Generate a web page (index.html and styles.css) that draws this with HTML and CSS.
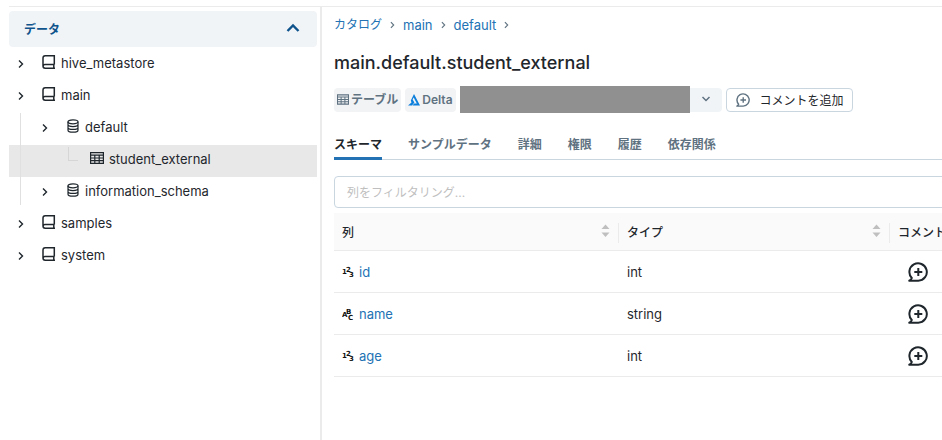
FILE: index.html
```html
<!DOCTYPE html>
<html lang="ja">

<head>
 <meta charset="UTF-8">
 <meta name="viewport" content="width=device-width, initial-scale=1.0">
 <title>main.default.student_external</title>
 <link rel="stylesheet" href="styles.css">
</head>

<body>

 <!-- Iconos compartidos -->
 <svg class="sprite" aria-hidden="true">
  <symbol id="i-right" viewBox="0 0 8 10"><path d="M2 1.5 5.5 5 2 8.5" fill="none" stroke="currentColor" stroke-width="1.4"/></symbol>
  <symbol id="i-book" viewBox="0 0 14 14"><path d="M12.3 9.6V.8H3.2Q1 .8 1 3v8q0 2.2 2.2 2.2h9.8M12.3 9.6H3Q1 9.6 1 11.4M11.8 9.6v3.6" fill="none" stroke="currentColor" stroke-width="1.5"/></symbol>
  <symbol id="i-db" viewBox="0 0 14 14"><g fill="none" stroke="currentColor" stroke-width="1.2"><ellipse cx="7" cy="2.8" rx="5" ry="2"/><path d="M2 2.8v8.4c0 1.1 2.2 2 5 2s5-.9 5-2V2.8M2 5.6c0 1.1 2.2 2 5 2s5-.9 5-2M2 8.4c0 1.1 2.2 2 5 2s5-.9 5-2"/></g></symbol>
  <symbol id="i-table" viewBox="0 0 14 12"><path d="M.6.6h12.8v10.8H.6zM.6 3.2h12.8M.6 6h12.8M.6 8.7h12.8M4.8 3v8M9.2 3v8" fill="none" stroke="currentColor" stroke-width="1.2"/></symbol>
  <symbol id="i-comment" viewBox="0 0 20 20"><path d="M1.3 18.7h9A8.7 8.7 0 1 0 3.8 16q-.6 1.8-2.5 2.7zM10.3 6v8M6.3 10h8" fill="none" stroke="currentColor" stroke-width="2" stroke-linejoin="round"/></symbol>
  <symbol id="i-sort" viewBox="0 0 8 14"><path d="M0 5 4 .5 8 5zM0 8.5h8L4 13z" fill="currentColor"/></symbol>
  <symbol id="i-num" viewBox="0 0 13 12"><g class="glyph"><text x="0" y="8">1</text><text x="4" y="6">2</text><text x="7" y="11">3</text></g></symbol>
  <symbol id="i-abc" viewBox="0 0 13 12"><g class="glyph"><text x="0" y="9">A</text><text x="4" y="6">B</text><text x="6" y="12">C</text></g></symbol>
 </svg>

 <div class="layout">

  <aside class="sidebar">
   <button class="sidebar-title" type="button" aria-expanded="true">
    データ
    <svg width="14" height="10" viewBox="0 0 14 10"><path d="M1.5 8 7 2.5 12.5 8" fill="none" stroke="currentColor" stroke-width="2.4"/></svg>
   </button>
   <ul class="tree">
    <li class="row"><span class="caret"><svg><use href="#i-right"/></svg></span><svg class="icon"><use href="#i-book"/></svg>hive_metastore</li>
    <li class="row"><span class="caret"><svg><use href="#i-right"/></svg></span><svg class="icon"><use href="#i-book"/></svg>main</li>
    <li class="row"><span class="indent line"></span><span class="caret"><svg><use href="#i-right"/></svg></span><svg class="icon"><use href="#i-db"/></svg>default</li>
    <li class="row selected"><span class="indent line"></span><span class="indent"></span><span class="indent elbow"></span><svg class="icon"><use href="#i-table"/></svg>student_external</li>
    <li class="row"><span class="indent line end"></span><span class="caret"><svg><use href="#i-right"/></svg></span><svg class="icon"><use href="#i-db"/></svg>information_schema</li>
    <li class="row"><span class="caret"><svg><use href="#i-right"/></svg></span><svg class="icon"><use href="#i-book"/></svg>samples</li>
    <li class="row"><span class="caret"><svg><use href="#i-right"/></svg></span><svg class="icon"><use href="#i-book"/></svg>system</li>
   </ul>
  </aside>

  <main class="content">
   <nav class="breadcrumb">
    <a class="ja" href="#">カタログ</a>
    <svg><use href="#i-right"/></svg>
    <a href="#">main</a>
    <svg><use href="#i-right"/></svg>
    <a href="#">default</a>
    <svg><use href="#i-right"/></svg>
   </nav>

   <h1 class="title">main.default.student_external</h1>

   <div class="meta">
    <span class="tag"><svg width="12" height="11"><use href="#i-table"/></svg>テーブル</span>
    <span class="tag"><svg width="12" height="12" viewBox="0 0 12 12"><path d="M6 0 12 11.5H4.5L6.2 9.6H8.8L5.7 3.6 4.6 5.6 6.4 8.6 4 11.5H0L3.5 8.4 2.8 6.4z" fill="#0b7fdb"/></svg>Delta</span>
    <div class="owner">
     <span class="owner-name"></span>
     <button class="owner-toggle" type="button" aria-label="所有者"><svg width="10" height="6" viewBox="0 0 10 6"><path d="M1.5 1 5 4.5 8.5 1" fill="none" stroke="currentColor" stroke-width="1.5"/></svg></button>
    </div>
    <button class="add-comment" type="button"><svg width="14" height="14"><use href="#i-comment"/></svg>コメントを追加</button>
   </div>

   <nav class="tabs">
    <a class="tab active" href="#">スキーマ</a>
    <a class="tab" href="#">サンプルデータ</a>
    <a class="tab" href="#">詳細</a>
    <a class="tab" href="#">権限</a>
    <a class="tab" href="#">履歴</a>
    <a class="tab" href="#">依存関係</a>
   </nav>

   <input class="filter" type="text" placeholder="列をフィルタリング..." aria-label="列をフィルタリング">

   <table class="columns">
    <thead>
     <tr>
      <th class="col-name"><div class="head">列<svg><use href="#i-sort"/></svg></div></th>
      <th class="col-type"><div class="head">タイプ<svg><use href="#i-sort"/></svg></div></th>
      <th><div class="head last">コメント</div></th>
     </tr>
    </thead>
    <tbody>
     <tr>
      <td><div class="field"><svg><use href="#i-num"/></svg><a href="#">id</a></div></td>
      <td>int</td>
      <td><button class="comment" type="button" aria-label="コメントを追加"><svg><use href="#i-comment"/></svg></button></td>
     </tr>
     <tr>
      <td><div class="field"><svg><use href="#i-abc"/></svg><a href="#">name</a></div></td>
      <td>string</td>
      <td><button class="comment" type="button" aria-label="コメントを追加"><svg><use href="#i-comment"/></svg></button></td>
     </tr>
     <tr>
      <td><div class="field"><svg><use href="#i-num"/></svg><a href="#">age</a></div></td>
      <td>int</td>
      <td><button class="comment" type="button" aria-label="コメントを追加"><svg><use href="#i-comment"/></svg></button></td>
     </tr>
    </tbody>
   </table>
  </main>

 </div>

</body>

</html>
```
FILE: styles.css
```css
 :root {
  --main-font: Inter, "Noto Sans CJK JP", sans-serif;
  --text: #1f272d;
  --muted: #5f7281;
  --link: #2272b4;
  --line: #ebebeb;
  --border: #c9d6e0;
  --soft: #f1f4f7;
 }

 *,
 *::before,
 *::after {
  box-sizing: border-box;
 }

 body {
  margin: 0;
  padding: 6px 0 0 9px;
  font-family: var(--main-font);
  font-size: 13px;
  line-height: 20px;
  color: var(--text);
  overflow: hidden;
 }

 button,
 input {
  font-family: inherit;
  font-size: 12px;
  color: inherit;
 }

 a {
  color: var(--link);
  text-decoration: none;
 }

 .sprite {
  display: none;
 }

 .layout {
  display: flex;
  min-height: calc(100vh - 6px);
  border-top: 1px solid var(--line);
 }

 /*  - - - Barra lateral - - -  */
 .sidebar {
  flex: 0 0 313px;
  padding: 4px 3px 0 0;
  border-right: 2px solid var(--line);
 }

 .sidebar-title {
  display: flex;
  align-items: center;
  justify-content: space-between;
  width: 100%;
  height: 36px;
  padding: 0 17px 2px 15px;
  border: 0;
  border-radius: 4px;
  background-color: var(--soft);
  color: #0e538b;
  font-weight: 700;
 }

 .tree {
  margin: 2px 0 0;
  padding: 0;
  list-style: none;
 }

 .row {
  display: flex;
  align-items: center;
  height: 32px;
  padding-bottom: 4px;
 }

 .selected {
  background-color: #e8e8e8;
 }

 .caret,
 .indent {
  flex: 0 0 24px;
 }

 .caret svg {
  display: block;
  width: 8px;
  height: 10px;
  margin: 2px auto 0;
 }

 .line::before {
  content: "";
  display: block;
  height: 32px;
  margin: 4px 0 0 11px;
  border-left: 1px solid #e0e0e0;
 }

 .line.end::before {
  height: 28px;
  margin-top: 0;
 }

 .elbow::before {
  content: "";
  display: block;
  width: 10px;
  height: 14px;
  margin: 0 0 10px 11px;
  border: solid #d6d6d6;
  border-width: 0 0 1px 1px;
 }

 .icon {
  width: 14px;
  height: 14px;
  margin: 0 5px 2px 9px;
 }

 /*  - - - Contenido - - -  */
 .content {
  flex: 1;
  min-width: 0;
  padding: 8px 0 0 12px;
 }

 .breadcrumb {
  display: flex;
  align-items: center;
  gap: 7px;
 }

 .breadcrumb svg {
  width: 7px;
  height: 8px;
  color: var(--muted);
 }

 .ja {
  font-size: 12px;
 }

 .title {
  margin: 15px 0 11px;
  font-size: 18px;
  font-weight: 500;
  line-height: 25px;
 }

 .meta {
  display: flex;
  align-items: center;
  height: 27px;
  gap: 4px;
 }

 .tag {
  display: flex;
  align-items: center;
  gap: 2px;
  height: 24px;
  padding: 0 3px;
  border-radius: 4px;
  background-color: #f2f3f5;
  color: var(--muted);
  font-size: 12px;
  font-weight: 600;
 }

 .owner {
  display: flex;
  align-items: center;
 }

 .owner-name {
  width: 230px;
  height: 27px;
  background-color: #909090;
 }

 .owner-toggle {
  width: 32px;
  height: 24px;
  padding: 0 0 4px;
  border: 0;
  border-radius: 0 4px 4px 0;
  background-color: var(--soft);
  color: var(--muted);
 }

 .add-comment {
  display: flex;
  align-items: center;
  gap: 10px;
  height: 24px;
  padding: 0 8px 0 9px;
  border: 1px solid var(--border);
  border-radius: 4px;
  background-color: #fff;
 }

 .add-comment svg {
  color: var(--muted);
 }

 .tabs {
  display: flex;
  gap: 26px;
  margin-top: 20px;
  box-shadow: inset 0 -1px var(--border);
 }

 .tab {
  height: 27px;
  padding-top: 2px;
  color: var(--muted);
  font-size: 12px;
  font-weight: 700;
 }

 .tab.active {
  border-bottom: 3px solid var(--link);
  color: var(--text);
 }

 .filter {
  display: block;
  width: calc(100% + 8px);
  height: 32px;
  margin: 16px 0 5px;
  padding: 0 12px;
  border: 1px solid var(--border);
  border-radius: 4px;
 }

 .filter::placeholder {
  color: #bfbfbf;
 }

 /*  - - - Tabla de columnas - - -  */
 .columns {
  width: calc(100% + 90px);
  table-layout: fixed;
  border-collapse: separate;
  border-spacing: 0;
 }

 .col-name {
  width: 285px;
 }

 .col-type {
  width: 271px;
 }

 .columns th {
  height: 38px;
  padding: 2px 0 0;
  border-bottom: 1px solid var(--line);
  background-color: #fafafa;
  font-size: 12px;
  font-weight: 500;
  text-align: left;
 }

 .head {
  display: flex;
  align-items: center;
  justify-content: space-between;
  padding: 0 8px;
  border-right: 1px solid var(--line);
 }

 .head svg {
  width: 9px;
  height: 14px;
  margin-bottom: 4px;
  color: #bfbfbf;
 }

 .head.last {
  border-right: 0;
 }

 .columns td {
  height: 42px;
  padding: 0 8px;
  border-bottom: 1px solid var(--line);
 }

 .field {
  display: flex;
  align-items: center;
  gap: 4px;
 }

 .field svg {
  width: 13px;
  height: 12px;
 }

 .glyph {
  fill: #111;
  font-family: "DejaVu Sans", sans-serif;
  font-size: 7px;
  font-weight: 700;
 }

 .comment {
  display: block;
  padding: 0 0 0 10px;
  border: 0;
  background: none;
 }

 .comment svg {
  display: block;
  width: 20px;
  height: 20px;
 }
```
